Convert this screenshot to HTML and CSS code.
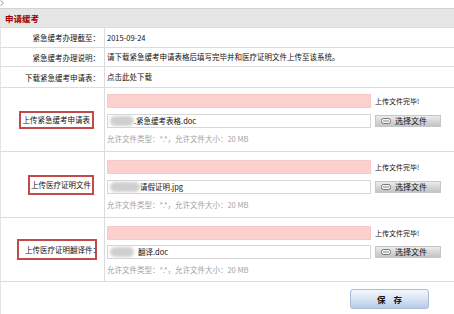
FILE: index.html
```html
<!DOCTYPE html>
<html lang="zh-CN">
<head>
<meta charset="utf-8">
<title>申请缓考</title>
<link rel="stylesheet" href="styles.css">
</head>
<body>
<div class="crumb"><svg width="6" height="8" viewBox="0 0 6 8"><path d="M0.5 0.5 L3.5 3 L0.5 5.5" fill="none" stroke="#9a9a9a" stroke-width="1"/></svg></div>
<table class="form">
  <colgroup><col class="lab"><col></colgroup>
  <tr class="head"><td colspan="2">申请缓考</td></tr>
  <tr class="r1"><th>紧急缓考办理截至：</th><td>2015-09-24</td></tr>
  <tr class="r2"><th>紧急缓考办理说明：</th><td>请下载紧急缓考申请表格后填写完毕并和医疗证明文件上传至该系统。</td></tr>
  <tr class="r3"><th>下载紧急缓考申请表：</th><td>点击此处下载</td></tr>
  <tr class="ru ru1">
    <th class="pr10"><span class="mark m1">上传紧急缓考申请表</span></th>
    <td class="up">
      <div class="line"><span class="pink"></span><span class="status">上传文件完毕!</span></div>
      <div class="line"><span class="file"><span class="blob"></span><span class="fname">.紧急缓考表格.doc</span></span><span class="btn"><svg width="10" height="6" viewBox="0 0 10 6"><rect x="0.5" y="0.5" width="9" height="5" rx="2" fill="#f4f4f4" stroke="#777"/><line x1="2" y1="3" x2="8" y2="3" stroke="#888"/></svg>选择文件</span></div>
      <div class="hint">允许文件类型：*.*，允许文件大小：20 MB</div>
    </td>
  </tr>
  <tr class="ru ru2">
    <th class="pr10"><span class="mark m2">上传医疗证明文件</span></th>
    <td class="up up2">
      <div class="line"><span class="pink"></span><span class="status">上传文件完毕!</span></div>
      <div class="line"><span class="file"><span class="blob b2"></span><span class="fname">请假证明.jpg</span></span><span class="btn"><svg width="10" height="6" viewBox="0 0 10 6"><rect x="0.5" y="0.5" width="9" height="5" rx="2" fill="#f4f4f4" stroke="#777"/><line x1="2" y1="3" x2="8" y2="3" stroke="#888"/></svg>选择文件</span></div>
      <div class="hint">允许文件类型：*.*，允许文件大小：20 MB</div>
    </td>
  </tr>
  <tr class="ru ru3">
    <th class="pr7"><span class="mark m3">上传医疗证明翻译件<span class="colon">：</span></span></th>
    <td class="up up3">
      <div class="line"><span class="pink"></span><span class="status">上传文件完毕!</span></div>
      <div class="line"><span class="file"><span class="blob b3"></span><span class="fname">翻译.doc</span></span><span class="btn"><svg width="10" height="6" viewBox="0 0 10 6"><rect x="0.5" y="0.5" width="9" height="5" rx="2" fill="#f4f4f4" stroke="#777"/><line x1="2" y1="3" x2="8" y2="3" stroke="#888"/></svg>选择文件</span></div>
      <div class="hint">允许文件类型：*.*，允许文件大小：20 MB</div>
    </td>
  </tr>
  <tr class="foot"><td colspan="2"><div class="actions"><button class="save">保存</button></div></td></tr>
</table>
</body>
</html>
```
FILE: styles.css
```css
* { box-sizing: border-box; }
html, body { margin: 0; padding: 0; }
body {
  width: 454px;
  height: 314px;
  overflow: hidden;
  background: #fff;
  font-family: "Noto Sans CJK SC", "Noto Sans", sans-serif;
  font-size: 7.5px;
  color: #111;
}
.crumb { height: 8px; }
.crumb svg { display: block; }

.form {
  width: 454px;
  border-collapse: collapse;
  table-layout: fixed;
  border-left: 1px solid #e4e4e4;
}
.form col.lab { width: 104px; }
.form th {
  font-weight: normal;
  text-align: right;
  padding: 0 4px 0 0;
  border-right: 1px solid #dcdcdc;
  border-bottom: 1px solid #dcdcdc;
  white-space: nowrap;
  vertical-align: middle;
}
.form td {
  padding: 0 0 0 2px;
  border-bottom: 1px solid #dcdcdc;
  white-space: nowrap;
  vertical-align: middle;
  line-height: 10px;
}
.head td {
  height: 19px;
  background: #e6e6e6;
  border-top: 1px solid #d2d2d2;
  color: #990000;
  font-weight: bold;
  font-size: 8.5px;
  padding-left: 4px;
}
.r1 th, .r1 td { height: 20px; }
.r2 th, .r2 td { height: 19px; }
.r3 th, .r3 td { height: 21px; }
.ru1 th, .ru1 td { height: 64px; }
.ru2 th, .ru2 td { height: 66px; }
.ru3 th, .ru3 td { height: 64px; }

.form th.pr10 { padding-right: 10px; }
.form th.pr7 { padding-right: 7px; }
.mark {
  display: inline-block;
  border: 2px solid #c24a48;
  line-height: 10px;
  color: #111;
}
.m1 { padding: 2px 2px; }
.m2 { padding: 3px 1px; }
.m3 { padding: 4px 0 3px 6px; }
.colon { margin-right: -5px; }

.form td.up { vertical-align: top; padding: 6px 0 0 2px; }
.form td.up2 { padding-top: 8px; }
.form td.up3 { padding-top: 8px; }
.line {
  display: flex;
  align-items: center;
  gap: 4px;
  height: 14px;
}
.line + .line { margin-top: 6px; }
.up3 .line + .line { margin-top: 5px; }
.pink {
  width: 264px;
  height: 14px;
  background: #fdd0d0;
  border: 1px solid #f6c8c8;
}
.status { font-size: 7px; color: #111; }
.file {
  width: 264px;
  height: 14px;
  border: 1px solid #d6d6d6;
  display: flex;
  align-items: center;
  overflow: hidden;
}
.blob {
  width: 24px;
  height: 10px;
  margin-left: 2px;
  background: #cfcfcf;
  border-radius: 5px;
  filter: blur(1.5px);
  flex: none;
}
.b2 { width: 30px; }
.b3 { width: 24px; margin-right: 4px; }
.fname { color: #111; }
.btn {
  width: 66px;
  height: 12px;
  display: flex;
  align-items: center;
  gap: 4px;
  padding-left: 5px;
  font-size: 8px;
  color: #111;
  background: linear-gradient(#ececec, #d2d2d2 60%, #c4c4c4);
  border: 1px solid #c6c6c6;
}
.btn svg { display: block; flex: none; }
.hint {
  margin-top: 5px;
  color: #a2a2a2;
  line-height: 12px;
}

.foot td { border-bottom: none; padding: 7px 0 0 0; vertical-align: top; height: 33px; }
.actions { display: flex; justify-content: flex-end; padding-right: 25px; }
.save {
  width: 79px;
  height: 20px;
  border: 1px solid #a8bcda;
  border-radius: 3px;
  background: linear-gradient(#f3f7fd, #d8e4f5 50%, #b9cbe7);
  font-family: "Noto Sans CJK SC", sans-serif;
  font-size: 8.5px;
  font-weight: bold;
  color: #111;
  letter-spacing: 8px;
  padding: 0 0 0 8px;
}
```
